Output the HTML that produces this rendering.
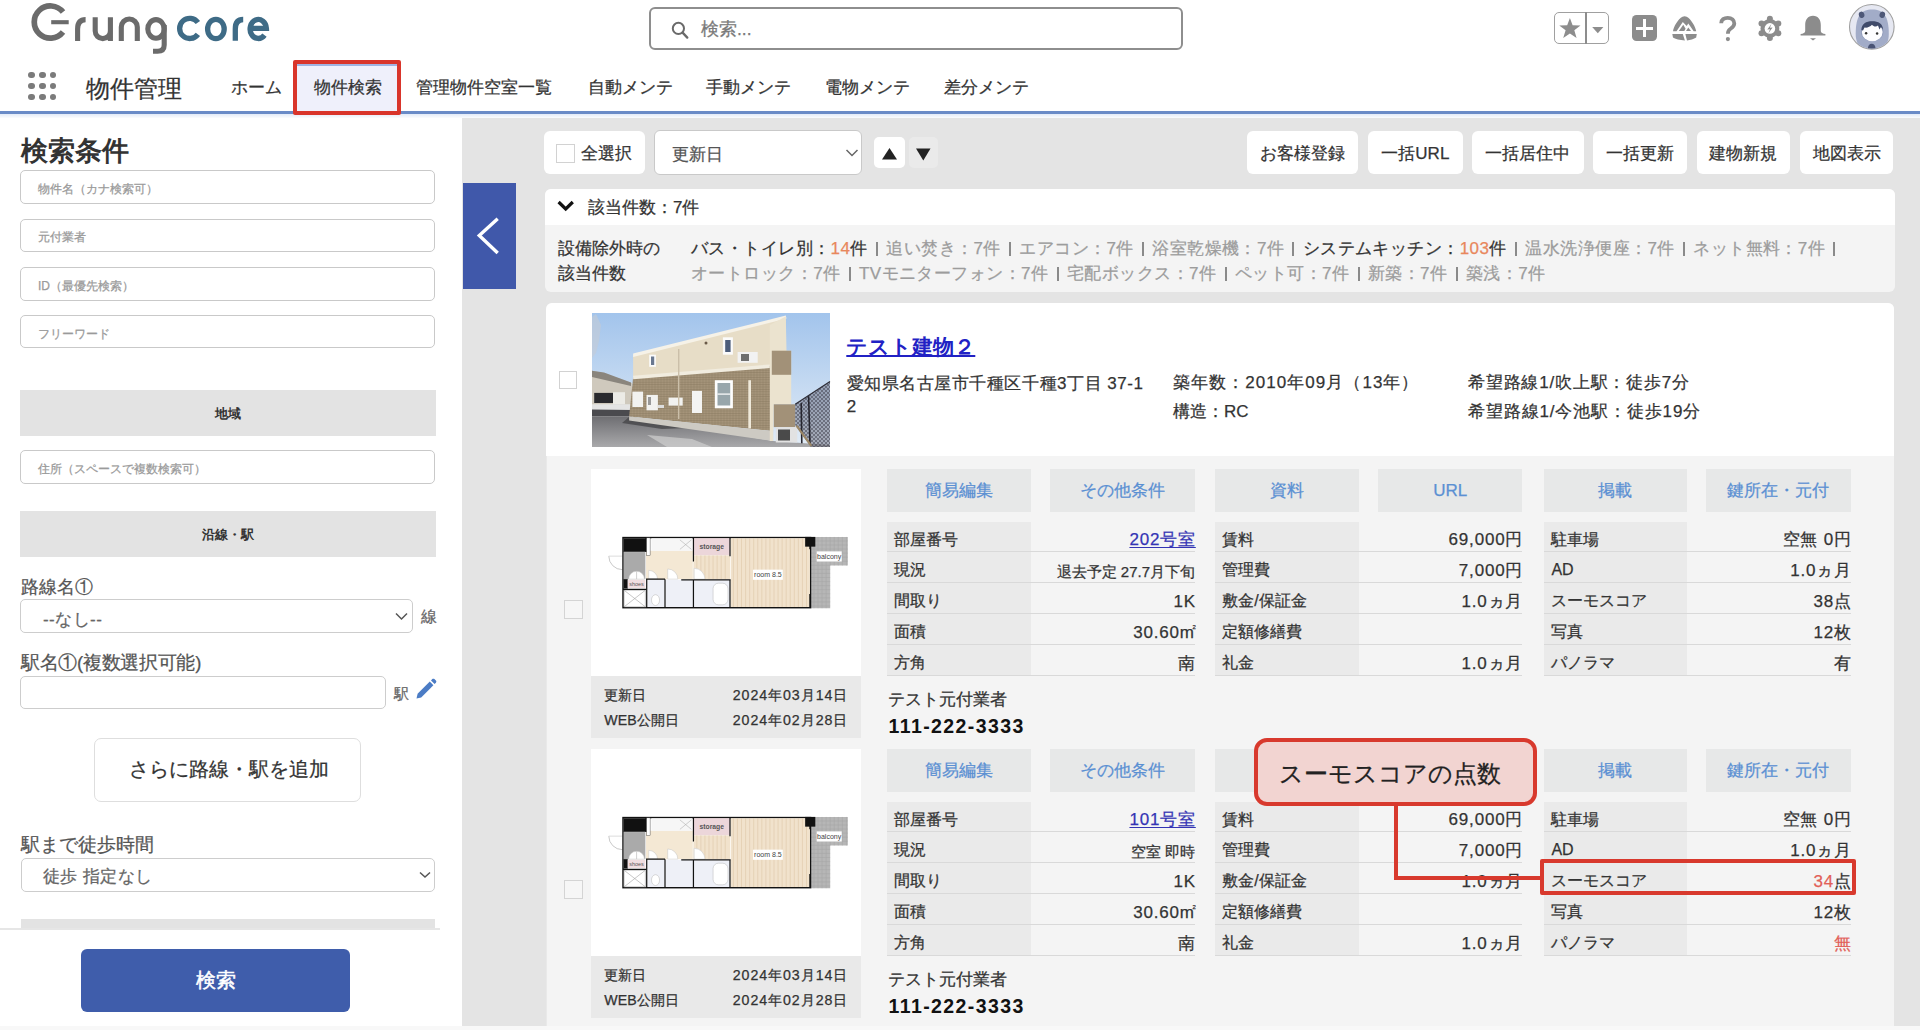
<!DOCTYPE html>
<html lang="ja"><head><meta charset="utf-8"><title>物件検索</title>
<style>
html,body{margin:0;padding:0}
body{width:1920px;height:1030px;overflow:hidden;position:relative;background:#e4e4e4;font-family:"Liberation Sans",sans-serif;color:#333}
.t{position:absolute;white-space:nowrap;-webkit-text-stroke-width:0.25px}
.r{position:absolute;box-sizing:border-box}
svg{position:absolute;overflow:visible}
</style></head><body>

<div class="r" style="left:0px;top:0px;width:1920px;height:111px;background:#fff"></div>
<svg style="left:0;top:0" width="300" height="60" viewBox="0 0 300 60">
<g fill="none" stroke="#6b6b6b" stroke-width="5.4" stroke-linecap="butt">
<path d="M63.0 12.1 A16.1 16.1 0 1 0 63.0 32.0" stroke-width="5.7"/>
<path d="M51.2 22.2 H68.7" stroke-width="4.1"/>
<path d="M77.6 41 V29 Q77.6 19.6 85.6 19.6" stroke-width="5.1"/>
<path d="M95.2 17.2 V31 A7.6 7.6 0 0 0 110.4 31 M110.4 17.2 V41" stroke-width="5.1"/>
<path d="M121.3 41 V27 A8 8 0 0 1 137.3 27 V41" stroke-width="5.1"/>
<ellipse cx="156" cy="28.9" rx="8.2" ry="9.3" stroke-width="5.1"/>
<path d="M164.2 25 V45 Q164.2 51.3 157.5 51.3 H153" stroke-width="5.1"/>
</g>
<g fill="none" stroke="#3e6b86" stroke-width="5.3">
<path d="M197.9 22.46 A10.1 10.1 0 1 0 197.9 34.34"/>
<ellipse cx="215.9" cy="29" rx="8.3" ry="9.7"/>
<path d="M235.3 40.8 V29 Q235.3 19.5 243.2 19.5"/>
<path d="M250.1 28.45 H266.4 A8.15 9.5 0 1 0 264.5 35.1"/>
</g></svg>
<div class="r" style="left:649px;top:7px;width:534px;height:42.6px;border:2px solid #8e8e8e;border-radius:6px;background:#fff"></div>
<svg style="left:670px;top:20px" width="24" height="22" viewBox="0 0 24 22">
<circle cx="8.4" cy="8.4" r="5.6" fill="none" stroke="#6a6a6a" stroke-width="2"/>
<path d="M12.6 12.6 L17.3 17.6" stroke="#6a6a6a" stroke-width="2.3" stroke-linecap="round"/></svg>
<div class="t " style="left:701px;top:20.7px;font-size:17.5px;line-height:17.5px;color:#7a7a7a;font-weight:normal;">検索...</div>
<div class="r" style="left:1553.5px;top:12.3px;width:55.5px;height:31.499999999999996px;border:1.8px solid #a0a0a0;border-radius:5px"></div>
<div class="r" style="left:1584.8px;top:12.3px;width:1.7999999999999545px;height:31.499999999999996px;background:#8d8d8d"></div>
<svg style="left:1559px;top:17px" width="22" height="22" viewBox="0 0 22 22">
<path d="M10.90 0.88 L13.61 8.34 L21.52 8.45 L15.31 13.31 L17.57 20.99 L10.90 16.47 L4.23 20.99 L6.61 13.31 L0.28 8.45 L8.19 8.34 Z" fill="#8d8d8d"/></svg>
<svg style="left:1590px;top:26px" width="16" height="10" viewBox="0 0 16 10">
<path d="M2.2 1 H13.4 L7.8 7.3 Z" fill="#8d8d8d"/></svg>
<div class="r" style="left:1631.5px;top:15px;width:25.700000000000045px;height:26px;background:#8c8c8c;border-radius:4.5px"></div>
<div class="r" style="left:1635.5px;top:26.5px;width:17.700000000000045px;height:3.0px;background:#fff"></div>
<div class="r" style="left:1642.8px;top:19.3px;width:3.0px;height:17.499999999999996px;background:#fff"></div>
<svg style="left:1665px;top:10px" width="40" height="36" viewBox="0 0 40 36">
<g fill="#8c8c8c">
<path d="M8 21.2 C8.5 17 13 9 17.5 6.8 C18.8 6 20.4 6 21.7 6.8 C26 9 30.6 17 31.2 21.2 L28.7 21.2 L23.3 13.6 L21.7 16 L17.8 12 L11.5 21.2 Z"/>
<path d="M13.8 21.1 L18.3 14.8 L20.6 18.8 L19.3 21.1 Z"/>
<path d="M21 21.1 L23.3 17.4 L26 21.1 Z"/>
<path d="M7.3 23.9 L17.8 23.9 L19.9 30.4 C15 30 10 28.8 8 27.4 Z"/>
<path d="M20.4 23.9 L31.8 23.9 L31.2 27.4 C29 28.8 25 30 22 30.4 L20.8 26 Z"/>
</g></svg>
<svg style="left:1717px;top:15.8px" width="22" height="27" viewBox="0 0 22 27">
<path d="M4.2 7.2 C4.2 3.5 7.2 1.8 10.7 1.8 C14.8 1.8 17.3 4.3 17.3 7.5 C17.3 10.5 15 11.8 13.2 13 C11.4 14.2 10.9 15.3 10.9 17.8" fill="none" stroke="#8c8c8c" stroke-width="3.8"/>
<circle cx="10.9" cy="23.1" r="2.1" fill="#8c8c8c"/></svg>
<svg style="left:1757px;top:15px" width="26" height="27" viewBox="0 0 26 27">
<g fill="#8c8c8c">
<circle cx="12.9" cy="13.4" r="9.4"/><circle cx="12.90" cy="3.70" r="3.0"/><circle cx="21.30" cy="8.55" r="3.0"/><circle cx="21.30" cy="18.25" r="3.0"/><circle cx="12.90" cy="23.10" r="3.0"/><circle cx="4.50" cy="18.25" r="3.0"/><circle cx="4.50" cy="8.55" r="3.0"/>
</g>
<circle cx="12.9" cy="13.4" r="5.3" fill="#fff"/>
<path d="M14.4 9.0 L10.3 14.6 L13.0 14.2 L11.4 18.2 L15.6 12.4 L12.9 12.8 Z" fill="#8c8c8c"/>
</svg>
<svg style="left:1799px;top:14px" width="28" height="28" viewBox="0 0 28 28">
<path d="M14 1.8 C8.8 1.8 6.2 5.8 6.2 11 V17 C6.2 18.8 4.2 19.6 1.6 20.1 V21.6 H26.4 V20.1 C23.8 19.6 21.8 18.8 21.8 17 V11 C21.8 5.8 19.2 1.8 14 1.8 Z" fill="#8c8c8c"/>
<path d="M11 24.2 H17 L14 26.5 Z" fill="#8c8c8c"/></svg>
<svg style="left:1848px;top:3px" width="48" height="48" viewBox="0 0 48 48">
<defs><clipPath id="avc"><circle cx="23.8" cy="23.8" r="21.8"/></clipPath></defs>
<circle cx="23.8" cy="23.8" r="22.3" fill="#e6e8f2" stroke="#a0a0a0" stroke-width="1.1"/>
<g clip-path="url(#avc)">
<path d="M7.7 31 C7.7 13 13 6.6 24.2 6.6 C35.4 6.6 40.8 13 40.8 31 C40.8 42 35 48 24.2 48 C13.4 48 7.7 42 7.7 31 Z" fill="#a2acc8"/>
<ellipse cx="13.6" cy="11.8" rx="2.8" ry="3.2" fill="#4e5878" transform="rotate(-15 13.6 11.8)"/>
<ellipse cx="34.3" cy="11.8" rx="2.8" ry="3.2" fill="#4e5878" transform="rotate(15 34.3 11.8)"/>
<ellipse cx="24.2" cy="28.4" rx="11.2" ry="10.2" fill="#8e99b8"/>
<ellipse cx="24.2" cy="29" rx="10.4" ry="9.2" fill="#fdfdff"/>
<path d="M13.4 27 C13.6 20.5 18 18.2 24.2 18.2 C30.4 18.2 34.8 20.5 35 26.5 L33 24 L31.5 26.5 L30 22.5 C28 24.5 25.5 23.5 24 21.8 C22 24 19 25 16.5 24.5 L15 27.5 Z" fill="#3f4a6a"/>
<circle cx="18.1" cy="30.2" r="1.25" fill="#333"/><circle cx="29.1" cy="30.4" r="1.25" fill="#333"/>
<path d="M19.8 46 C19.8 42.5 21.6 40.8 23.7 40.8 C25.8 40.8 27.6 42.5 27.6 46 Z" fill="#4a5474"/>
</g></svg>
<div class="r" style="left:28.2px;top:71.9px;width:6.6px;height:6.6px;border-radius:50%;background:#7b7b7b"></div>
<div class="r" style="left:28.2px;top:82.7px;width:6.6px;height:6.6px;border-radius:50%;background:#7b7b7b"></div>
<div class="r" style="left:28.2px;top:93.5px;width:6.6px;height:6.6px;border-radius:50%;background:#7b7b7b"></div>
<div class="r" style="left:39.0px;top:71.9px;width:6.6px;height:6.6px;border-radius:50%;background:#7b7b7b"></div>
<div class="r" style="left:39.0px;top:82.7px;width:6.6px;height:6.6px;border-radius:50%;background:#7b7b7b"></div>
<div class="r" style="left:39.0px;top:93.5px;width:6.6px;height:6.6px;border-radius:50%;background:#7b7b7b"></div>
<div class="r" style="left:49.7px;top:71.9px;width:6.6px;height:6.6px;border-radius:50%;background:#7b7b7b"></div>
<div class="r" style="left:49.7px;top:82.7px;width:6.6px;height:6.6px;border-radius:50%;background:#7b7b7b"></div>
<div class="r" style="left:49.7px;top:93.5px;width:6.6px;height:6.6px;border-radius:50%;background:#7b7b7b"></div>
<div class="t " style="left:86px;top:77.2px;font-size:23.8px;line-height:23.8px;color:#333;font-weight:normal;">物件管理</div>
<div class="t " style="left:231px;top:78.7px;font-size:17px;line-height:17px;color:#333;font-weight:normal;">ホーム</div>
<div class="r" style="left:297px;top:64px;width:100px;height:47px;background:#eff0fb;border-top:2px solid #9fb3e2"></div>
<div class="t " style="left:314px;top:78.7px;font-size:17px;line-height:17px;color:#333;font-weight:normal;">物件検索</div>
<div class="t " style="left:416px;top:79.2px;font-size:17.2px;line-height:17.2px;color:#333;font-weight:normal;">管理物件空室一覧</div>
<div class="t " style="left:588px;top:79.2px;font-size:17px;line-height:17px;color:#333;font-weight:normal;">自動メンテ</div>
<div class="t " style="left:706px;top:79.2px;font-size:17px;line-height:17px;color:#333;font-weight:normal;">手動メンテ</div>
<div class="t " style="left:825px;top:79.2px;font-size:17px;line-height:17px;color:#333;font-weight:normal;">電物メンテ</div>
<div class="t " style="left:944px;top:79.2px;font-size:17px;line-height:17px;color:#333;font-weight:normal;">差分メンテ</div>
<div class="r" style="left:0px;top:111.3px;width:1920px;height:3.0px;background:#6a8bc7"></div>
<div class="r" style="left:0px;top:114.3px;width:1920px;height:3.700000000000003px;background:linear-gradient(#e3ebf8,#fbfcfe)"></div>
<div class="r" style="left:293px;top:60px;width:107.5px;height:54.5px;border:4px solid #d9352b;border-radius:2px"></div>
<div class="r" style="left:0px;top:118px;width:462px;height:912px;background:#fff"></div>
<div class="t " style="left:21px;top:137.8px;font-size:26.5px;line-height:26.5px;color:#333;font-weight:bold;-webkit-text-stroke-width:0;">検索条件</div>
<div class="r" style="left:20px;top:170px;width:415px;height:34px;border:1.8px solid #c9c9c9;border-radius:5px;background:#fff"></div>
<div class="t " style="left:38px;top:183.0px;font-size:12px;line-height:12px;color:#9a9a9a;font-weight:normal;">物件名（カナ検索可）</div>
<div class="r" style="left:20px;top:218.5px;width:415px;height:33.5px;border:1.8px solid #c9c9c9;border-radius:5px;background:#fff"></div>
<div class="t " style="left:38px;top:231.2px;font-size:12px;line-height:12px;color:#9a9a9a;font-weight:normal;">元付業者</div>
<div class="r" style="left:20px;top:266.5px;width:415px;height:34.0px;border:1.8px solid #c9c9c9;border-radius:5px;background:#fff"></div>
<div class="t " style="left:38px;top:279.5px;font-size:12px;line-height:12px;color:#9a9a9a;font-weight:normal;">ID（最優先検索）</div>
<div class="r" style="left:20px;top:314.6px;width:415px;height:33.89999999999998px;border:1.8px solid #c9c9c9;border-radius:5px;background:#fff"></div>
<div class="t " style="left:38px;top:327.5px;font-size:12px;line-height:12px;color:#9a9a9a;font-weight:normal;">フリーワード</div>
<div class="r" style="left:20px;top:390px;width:416px;height:46px;background:#e3e3e3"></div>
<div class="t" style="left:20px;width:416px;top:406.6px;font-size:13px;line-height:13px;color:#333;font-weight:bold;text-align:center;-webkit-text-stroke-width:0;">地域</div>
<div class="r" style="left:20px;top:449.5px;width:415px;height:34.0px;border:1.8px solid #c9c9c9;border-radius:5px;background:#fff"></div>
<div class="t " style="left:38px;top:462.5px;font-size:12px;line-height:12px;color:#9a9a9a;font-weight:normal;">住所（スペースで複数検索可）</div>
<div class="r" style="left:20px;top:511px;width:416px;height:46px;background:#e3e3e3"></div>
<div class="t" style="left:20px;width:416px;top:527.6px;font-size:13px;line-height:13px;color:#333;font-weight:bold;text-align:center;-webkit-text-stroke-width:0;">沿線・駅</div>
<div class="t " style="left:21px;top:577.7px;font-size:18.4px;line-height:18.4px;color:#555;font-weight:normal;">路線名①</div>
<div class="r" style="left:20px;top:599px;width:392.5px;height:34.299999999999955px;border:1.5px solid #cdcdcd;border-radius:5px;background:#fff"></div>
<div class="t " style="left:43px;top:610.7px;font-size:17px;line-height:17px;color:#666;font-weight:normal;letter-spacing:0.45px">--なし--</div>
<svg style="left:395px;top:612px" width="13" height="9" viewBox="0 0 13 9"><path d="M1 1.5 L6.5 7 L12 1.5" fill="none" stroke="#555" stroke-width="1.5"/></svg>
<div class="t " style="left:420.5px;top:608.8px;font-size:16px;line-height:16px;color:#666;font-weight:normal;">線</div>
<div class="t " style="left:21px;top:653.9px;font-size:18.6px;line-height:18.6px;color:#555;font-weight:normal;letter-spacing:-0.3px">駅名①(複数選択可能)</div>
<div class="r" style="left:20px;top:675.6px;width:365.6px;height:33.39999999999998px;border:1.5px solid #cdcdcd;border-radius:5px;background:#fff"></div>
<div class="t " style="left:393.6px;top:685.6px;font-size:15px;line-height:15px;color:#666;font-weight:normal;">駅</div>
<svg style="left:414px;top:678px" width="23" height="22" viewBox="0 0 23 22">
<path d="M2.5 20.5 L3.6 15.8 L15.8 3.6 L19.4 7.2 L7.2 19.4 Z" fill="#4b7cc5"/>
<path d="M17 2.4 L18.3 1.1 C18.9 0.5 19.8 0.5 20.4 1.1 L21.9 2.6 C22.5 3.2 22.5 4.1 21.9 4.7 L20.6 6 Z" fill="#4b7cc5"/></svg>
<div class="r" style="left:94.2px;top:737.5px;width:266.8px;height:64.29999999999995px;border:1.5px solid #dedede;border-radius:7px;background:#fff"></div>
<div class="t " style="left:129.4px;top:759.7px;font-size:19.8px;line-height:19.8px;color:#333;font-weight:normal;">さらに路線・駅を追加</div>
<div class="t " style="left:21px;top:836.2px;font-size:18.5px;line-height:18.5px;color:#555;font-weight:normal;">駅まで徒歩時間</div>
<div class="r" style="left:20.5px;top:858.4px;width:414.9px;height:33.60000000000002px;border:1.5px solid #cdcdcd;border-radius:5px;background:#fff"></div>
<div class="t " style="left:43px;top:868.0px;font-size:17px;line-height:17px;color:#666;font-weight:normal;letter-spacing:0.38px">徒歩 指定なし</div>
<svg style="left:419px;top:871px" width="12" height="8" viewBox="0 0 12 8"><path d="M1 1.5 L6 6 L11 1.5" fill="none" stroke="#555" stroke-width="1.5"/></svg>
<div class="r" style="left:20.5px;top:919px;width:414.9px;height:9.200000000000045px;background:#e3e3e3"></div>
<div class="r" style="left:0px;top:928px;width:440px;height:1.5px;background:#e6e6e6"></div>
<div class="r" style="left:81.2px;top:949.3px;width:268.8px;height:62.60000000000002px;background:#3f5dab;border-radius:6px"></div>
<div class="t" style="left:81.2px;width:268.8px;top:971.2px;font-size:19.5px;line-height:19.5px;color:#fff;font-weight:normal;text-align:center;-webkit-text-stroke-width:0.5px">検索</div>
<div class="r" style="left:462.7px;top:183px;width:52.900000000000034px;height:105.60000000000002px;background:#4058aa"></div>
<svg style="left:475px;top:214px" width="28" height="44" viewBox="0 0 28 44"><path d="M22.7 4.8 L4.3 21.5 L22.7 39" fill="none" stroke="#fff" stroke-width="3.4"/></svg>
<div class="r" style="left:544.4px;top:130.5px;width:100.20000000000005px;height:43.80000000000001px;background:#fff;border-radius:6px"></div>
<div class="r" style="left:556.4px;top:144px;width:18.600000000000023px;height:18.69999999999999px;border:1.5px solid #d2d2d2;background:#fff"></div>
<div class="t " style="left:581px;top:146.0px;font-size:16.8px;line-height:16.8px;color:#333;font-weight:normal;">全選択</div>
<div class="r" style="left:654.2px;top:129.8px;width:207.79999999999995px;height:45.19999999999999px;background:#fff;border:1.3px solid #c9c9c9;border-radius:6px"></div>
<div class="t " style="left:672px;top:145.7px;font-size:17px;line-height:17px;color:#555;font-weight:normal;">更新日</div>
<svg style="left:845px;top:148px" width="14" height="10" viewBox="0 0 14 10"><path d="M1.5 2 L7 7.5 L12.5 2" fill="none" stroke="#666" stroke-width="1.5"/></svg>
<div class="r" style="left:874.3px;top:137px;width:30.700000000000045px;height:30.69999999999999px;background:#fff;border-radius:5px"></div>
<svg style="left:880px;top:146px" width="20" height="16" viewBox="0 0 20 16"><path d="M2 13.4 L9.5 2 L17 13.4 Z" fill="#222"/></svg>
<div class="r" style="left:908.6px;top:137px;width:29.399999999999977px;height:30.69999999999999px;background:#eaeaea;border-radius:5px"></div>
<svg style="left:914px;top:146px" width="20" height="16" viewBox="0 0 20 16"><path d="M2 2.4 L16.5 2.4 L9.3 14.5 Z" fill="#222"/></svg>
<div class="r" style="left:1246.5px;top:130.8px;width:111.0px;height:43.39999999999998px;background:#fff;border-radius:6px"></div>
<div class="t" style="left:1246.5px;width:111.0px;top:145.2px;font-size:17px;line-height:17px;color:#333;font-weight:normal;text-align:center;">お客様登録</div>
<div class="r" style="left:1367.8px;top:130.8px;width:95.10000000000014px;height:43.39999999999998px;background:#fff;border-radius:6px"></div>
<div class="t" style="left:1367.8px;width:95.10000000000014px;top:145.2px;font-size:17px;line-height:17px;color:#333;font-weight:normal;text-align:center;">一括URL</div>
<div class="r" style="left:1472px;top:130.8px;width:111.5px;height:43.39999999999998px;background:#fff;border-radius:6px"></div>
<div class="t" style="left:1472px;width:111.5px;top:145.2px;font-size:17px;line-height:17px;color:#333;font-weight:normal;text-align:center;">一括居住中</div>
<div class="r" style="left:1593.3px;top:130.8px;width:93.5px;height:43.39999999999998px;background:#fff;border-radius:6px"></div>
<div class="t" style="left:1593.3px;width:93.5px;top:145.2px;font-size:17px;line-height:17px;color:#333;font-weight:normal;text-align:center;">一括更新</div>
<div class="r" style="left:1696.5px;top:130.8px;width:93.29999999999995px;height:43.39999999999998px;background:#fff;border-radius:6px"></div>
<div class="t" style="left:1696.5px;width:93.29999999999995px;top:145.2px;font-size:17px;line-height:17px;color:#333;font-weight:normal;text-align:center;">建物新規</div>
<div class="r" style="left:1800px;top:130.8px;width:93px;height:43.39999999999998px;background:#fff;border-radius:6px"></div>
<div class="t" style="left:1800px;width:93px;top:145.2px;font-size:17px;line-height:17px;color:#333;font-weight:normal;text-align:center;">地図表示</div>
<div class="r" style="left:545.3px;top:189px;width:1350.1000000000001px;height:103px;background:#f4f4f4;border-radius:6px;overflow:hidden"></div>
<div class="r" style="left:545.3px;top:189px;width:1350.1000000000001px;height:36px;background:#fff;border-radius:6px 6px 0 0"></div>
<svg style="left:556px;top:199px" width="20" height="14" viewBox="0 0 20 14"><path d="M2.6 3 L9.7 10 L16.8 3" fill="none" stroke="#111" stroke-width="3.2"/></svg>
<div class="t " style="left:588px;top:199.2px;font-size:17px;line-height:17px;color:#333;font-weight:normal;">該当件数：7件</div>
<div class="t " style="left:558px;top:239.8px;font-size:17px;line-height:17px;color:#333;font-weight:normal;">設備除外時の</div>
<div class="t " style="left:558px;top:264.6px;font-size:17px;line-height:17px;color:#333;font-weight:normal;">該当件数</div>
<div class="t " style="left:691px;top:239.8px;font-size:17px;line-height:17px;color:#333;font-weight:normal;letter-spacing:0.45px"><span style="color:#333">バス・トイレ別：<span style="color:#e8875c">14</span>件</span><span style="display:inline-block;width:2px;height:14px;background:#707070;margin:0 8.2px;vertical-align:-2px;transform:scaleX(0.8)"></span><span style="color:#9c9c9c">追い焚き：7件</span><span style="display:inline-block;width:2px;height:14px;background:#707070;margin:0 8.2px;vertical-align:-2px;transform:scaleX(0.8)"></span><span style="color:#9c9c9c">エアコン：7件</span><span style="display:inline-block;width:2px;height:14px;background:#707070;margin:0 8.2px;vertical-align:-2px;transform:scaleX(0.8)"></span><span style="color:#9c9c9c">浴室乾燥機：7件</span><span style="display:inline-block;width:2px;height:14px;background:#707070;margin:0 8.2px;vertical-align:-2px;transform:scaleX(0.8)"></span><span style="color:#333">システムキッチン：<span style="color:#e8875c">103</span>件</span><span style="display:inline-block;width:2px;height:14px;background:#707070;margin:0 8.2px;vertical-align:-2px;transform:scaleX(0.8)"></span><span style="color:#9c9c9c">温水洗浄便座：7件</span><span style="display:inline-block;width:2px;height:14px;background:#707070;margin:0 8.2px;vertical-align:-2px;transform:scaleX(0.8)"></span><span style="color:#9c9c9c">ネット無料：7件</span><span style="display:inline-block;width:2px;height:14px;background:#707070;margin:0 8.2px;vertical-align:-2px;transform:scaleX(0.8)"></span></div>
<div class="t " style="left:691px;top:264.6px;font-size:17px;line-height:17px;color:#333;font-weight:normal;letter-spacing:0.45px"><span style="color:#9c9c9c">オートロック：7件</span><span style="display:inline-block;width:2px;height:14px;background:#707070;margin:0 8.2px;vertical-align:-2px;transform:scaleX(0.8)"></span><span style="color:#9c9c9c">TVモニターフォン：7件</span><span style="display:inline-block;width:2px;height:14px;background:#707070;margin:0 8.2px;vertical-align:-2px;transform:scaleX(0.8)"></span><span style="color:#9c9c9c">宅配ボックス：7件</span><span style="display:inline-block;width:2px;height:14px;background:#707070;margin:0 8.2px;vertical-align:-2px;transform:scaleX(0.8)"></span><span style="color:#9c9c9c">ペット可：7件</span><span style="display:inline-block;width:2px;height:14px;background:#707070;margin:0 8.2px;vertical-align:-2px;transform:scaleX(0.8)"></span><span style="color:#9c9c9c">新築：7件</span><span style="display:inline-block;width:2px;height:14px;background:#707070;margin:0 8.2px;vertical-align:-2px;transform:scaleX(0.8)"></span><span style="color:#9c9c9c">築浅：7件</span></div>
<div class="r" style="left:546px;top:302.6px;width:1348.2px;height:723.4px;background:#f4f4f4;border-radius:6px 6px 0 0;overflow:hidden;border-left:1.5px solid #e9e9e9"></div>
<div class="r" style="left:546px;top:302.6px;width:1348.2px;height:153.7px;background:#fff;border-radius:6px 6px 0 0"></div>
<div class="r" style="left:559px;top:371px;width:18.399999999999977px;height:18.399999999999977px;border:1.5px solid #d2d2d2;background:#fff"></div>
<svg style="left:591.8px;top:312.5px" width="238" height="134" viewBox="0 0 238 134" preserveAspectRatio="none">
<defs><linearGradient id="sky" x1="0" y1="0" x2="0" y2="1"><stop offset="0" stop-color="#a2c4ec"/><stop offset="0.7" stop-color="#cfe0f3"/><stop offset="1" stop-color="#e2ecf6"/></linearGradient>
<linearGradient id="road" x1="0" y1="0" x2="0" y2="1"><stop offset="0" stop-color="#6e6e72"/><stop offset="1" stop-color="#a9a9ab"/></linearGradient>
<pattern id="brick" width="3" height="2.4" patternUnits="userSpaceOnUse"><rect width="3" height="2.4" fill="#a08f75"/><rect y="1.8" width="3" height="0.6" fill="#8f7f66"/><rect x="1.2" width="0.5" height="1.8" fill="#ab9a80"/></pattern>
<pattern id="fence" width="4" height="4" patternUnits="userSpaceOnUse"><path d="M0 0 L4 4 M4 0 L0 4" stroke="#3a3a46" stroke-width="0.5"/></pattern>
</defs>
<rect width="238" height="134" fill="url(#sky)"/>
<path d="M0 4 L4 1 L9 12 L7 28 L4 40 L0 45 Z" fill="#c4ccd6" opacity="0.6"/>
<!-- left house -->
<path d="M0 57.8 L12 60 L40 70 L40 92 L0 92 Z" fill="#cfc9bd"/>
<path d="M0 57.8 L12 59.5 L39 69.5 L39 73 L0 64 Z" fill="#8a857d"/>
<rect x="2.2" y="79.9" width="18.8" height="10.1" fill="#2a2a2e"/>
<rect x="21" y="79.2" width="12" height="12.1" fill="#ecebe6"/>
<!-- road -->
<path d="M0 91.3 L40 91.3 L40 104 L0 104 Z" fill="#e4e4e4"/>
<path d="M0 96.6 L40 97 L40 103.4 L0 103.4 Z" fill="#4a4a4e"/>
<path d="M0 103.4 L37 103.4 L181 128 L238 132 L238 134 L0 134 Z" fill="url(#road)"/>
<path d="M37 104 L120 114 L70 116 L30 110 Z" fill="#3e3e42" opacity="0.7"/>
<path d="M55 122 L100 126 L120 134 L75 134 Z" fill="#cfcfcf" opacity="0.7"/>
<!-- upper floor -->
<path d="M41.1 41.7 L193.8 3.5 L193.8 10 L177.8 53.1 L41.1 64.5 Z" fill="#e7ddc7"/>
<path d="M41.1 40.5 L193.8 2.5 L194.5 5.5 L41.1 44 Z" fill="#f6f2e8"/>
<!-- brick -->
<path d="M41.1 64.5 L177.8 53.1 L181.1 118.1 L37.1 103.4 Z" fill="url(#brick)"/>
<path d="M41.1 62.8 L177.8 51.4 L177.8 55 L41.1 66.3 Z" fill="#f1ecdf"/>
<path d="M37.1 103.4 L181.1 118.1 L181.1 128.1 L37.1 107.5 Z" fill="#cdcac3"/>
<!-- end wall -->
<path d="M177.8 12 L193.8 3.5 L194.5 37.7 L199.2 37.7 L199.2 91.3 L181.8 91.3 L181.1 128 L177.8 128 Z" fill="#ebe3cf"/>
<rect x="179.8" y="37.7" width="19.4" height="24.1" fill="#a29178"/>
<rect x="181.8" y="91.3" width="21.4" height="22.8" fill="#a29178"/>
<rect x="183.8" y="114.1" width="21.4" height="15.4" fill="#e2e2e2"/>
<rect x="186" y="116.5" width="12" height="11" fill="#4a4a4a"/>
<!-- windows -->
<rect x="57.2" y="41.7" width="6.7" height="12.1" fill="#fbfbfb"/><rect x="59" y="43.5" width="3.2" height="8.5" fill="#6a7890"/>
<rect x="130.9" y="24.3" width="10" height="17.4" fill="#fbfbfb"/><rect x="133.2" y="27" width="5.4" height="12" fill="#4d5d7a"/>
<rect x="122.8" y="67.2" width="18.1" height="28.1" fill="#fdfdfd"/><rect x="125.5" y="70" width="12.7" height="22.5" fill="#98a6ab"/><rect x="125.5" y="80.5" width="12.7" height="1.2" fill="#fff"/>
<rect x="100" y="77.9" width="10" height="22.1" fill="#f4f4f2"/>
<rect x="40.4" y="78.6" width="10.7" height="15.4" fill="#f2f2f0"/>
<rect x="54.5" y="81.9" width="11.4" height="15.4" fill="#f2f2f0"/><rect x="56" y="84" width="3" height="8" fill="#999"/>
<rect x="76.6" y="84.6" width="14.1" height="8" fill="#f2f2f0"/>
<rect x="66" y="92" width="6" height="3" fill="#ddd"/>
<rect x="145.6" y="39" width="20.1" height="10.8" fill="#f2f2f2"/><rect x="149" y="41" width="8" height="7" fill="#6e6e6e"/>
<rect x="156.3" y="67.2" width="2.7" height="48.2" fill="#efe9da"/>
<rect x="86" y="36" width="1.4" height="70" fill="#cbbfa9"/>
<circle cx="114" cy="30" r="1.5" fill="#6a5a48"/>
<!-- fence -->
<path d="M203.2 91.3 L238 68.5 L238 134 L219 134 L203.2 112 Z" fill="#58586a" opacity="0.45"/>
<path d="M203.2 91.3 L238 68.5 L238 134 L219 134 L203.2 112 Z" fill="url(#fence)"/>
<path d="M203.2 91.3 L238 68.5" stroke="#2e2e38" stroke-width="1.2"/>
<path d="M209.2 89.9 L209.8 130.2 M216.6 83.3 L218 131.5" stroke="#25252e" stroke-width="1.6"/>
<path d="M204.5 112.7 L219.3 132.8" stroke="#9c8868" stroke-width="2.2"/>
</svg>

<div class="t " style="left:846.3px;top:336.7px;font-size:20.6px;line-height:20.6px;color:#2121c4;font-weight:bold;-webkit-text-stroke-width:0;"><span style="text-decoration:underline;text-underline-offset:1px;text-decoration-thickness:2px">テスト建物２</span></div>
<div class="t " style="left:846.8px;top:375.2px;font-size:17px;line-height:17px;color:#333;font-weight:normal;letter-spacing:0.52px">愛知県名古屋市千種区千種3丁目 37-1</div>
<div class="t " style="left:846.8px;top:398.0px;font-size:17px;line-height:17px;color:#333;font-weight:normal;">2</div>
<div class="t " style="left:1173px;top:373.5px;font-size:17px;line-height:17px;color:#333;font-weight:normal;letter-spacing:1.05px">築年数：2010年09月（13年）</div>
<div class="t " style="left:1173px;top:403.2px;font-size:17px;line-height:17px;color:#333;font-weight:normal;">構造：RC</div>
<div class="t " style="left:1468px;top:373.5px;font-size:17px;line-height:17px;color:#333;font-weight:normal;letter-spacing:0.8px">希望路線1/吹上駅：徒歩7分</div>
<div class="t " style="left:1468px;top:403.2px;font-size:17px;line-height:17px;color:#333;font-weight:normal;letter-spacing:0.87px">希望路線1/今池駅：徒歩19分</div>
<div class="r" style="left:564.2px;top:600px;width:18.59999999999991px;height:18.700000000000045px;border:1.5px solid #d4d4d4;background:#f6f6f6"></div>
<div class="r" style="left:590.7px;top:468.6px;width:270.29999999999995px;height:207.69999999999993px;background:#fff"></div>
<svg style="left:600px;top:525px" width="260" height="95" viewBox="0 0 1920 702" preserveAspectRatio="none">
<path d="M65 230 A100 100 0 0 0 165 330" fill="none" stroke="#bbb" stroke-width="6"/>
<path d="M65 230 H165" stroke="#ccc" stroke-width="5"/>
<path d="M1560 88 H1830 V300 H1700 V615 H1560 Z" fill="#b6b6b6"/><g stroke="#9e9e9e" stroke-width="3" opacity="0.8"><path d="M1580 88V615M1610 88V615M1640 88V615M1670 88V615M1700 88V300M1730 88V300M1760 88V300M1790 88V300M1820 88V300M1560 118H1830M1560 148H1830M1560 178H1830M1560 208H1830M1560 238H1830M1560 268H1830M1560 298H1700M1560 328H1700M1560 358H1700M1560 388H1700M1560 418H1700M1560 448H1700M1560 478H1700M1560 508H1700M1560 538H1700M1560 568H1700M1560 598H1700"/></g>
<rect x="1600" y="195" width="185" height="75" fill="#fff"/>
<text x="1692" y="252" font-size="52" text-anchor="middle" fill="#444" font-family="Liberation Sans">balcony</text>
<rect x="170" y="93" width="1385" height="518" fill="#fff" stroke="#111" stroke-width="11"/>
<rect x="965" y="98" width="585" height="508" fill="#f1e2cc"/>
<g stroke="#dcc3a4" stroke-width="4">
<path d="M985 98V606M1015 98V606M1045 98V606M1075 98V606M1105 98V606M1135 98V606M1165 98V606M1195 98V606M1225 98V606M1255 98V606M1285 98V606M1315 98V606M1345 98V606M1375 98V606M1405 98V606M1435 98V606M1465 98V606M1495 98V606M1525 98V606"/>
</g>
<rect x="1130" y="330" width="220" height="75" fill="#fff"/>
<text x="1240" y="388" font-size="52" text-anchor="middle" fill="#444" font-family="Liberation Sans">room 8.5</text>
<rect x="690" y="98" width="270" height="127" fill="#ecd6da"/>
<text x="825" y="178" font-size="50" text-anchor="middle" fill="#555" font-family="Liberation Sans" font-weight="bold">storage</text>
<rect x="690" y="225" width="270" height="175" fill="#f1e2cc"/>
<g stroke="#dcc3a4" stroke-width="4"><path d="M715 225V400M745 225V400M775 225V400M805 225V400M835 225V400M865 225V400M895 225V400M925 225V400"/></g>
<rect x="340" y="190" width="345" height="210" fill="#f4e8d4"/>
<rect x="380" y="98" width="300" height="92" fill="#f6f6f6"/>
<path d="M590 110 L675 180 M675 110 L590 180" stroke="#aaa" stroke-width="4"/>
<rect x="175" y="98" width="165" height="100" fill="#111"/>
<rect x="175" y="200" width="160" height="200" fill="#aaa"/>
<path d="M270 400 L212 400 A58 58 0 0 1 270 342 Z M270 400 L328 400 A58 58 0 0 0 270 342 Z M360 400 L360 335 A65 65 0 0 1 425 400 Z M500 400 L500 325 A75 75 0 0 1 575 400 Z M695 400 L695 320 A80 80 0 0 1 775 400 Z" fill="#fff" stroke="#c8c8c8" stroke-width="4"/>
<rect x="175" y="400" width="30" height="70" fill="#111"/>
<rect x="205" y="405" width="130" height="60" fill="#f0dde0"/>
<text x="270" y="450" font-size="40" text-anchor="middle" fill="#555" font-family="Liberation Sans">shoes</text>
<path d="M178 482 H335 V605 H178 Z M178 482 L335 605 M335 482 L178 605" fill="#fff" stroke="#999" stroke-width="4"/>
<rect x="350" y="405" width="125" height="200" fill="#eef0f7"/>
<rect x="485" y="405" width="205" height="200" fill="#eef0f7"/>
<rect x="695" y="410" width="265" height="195" fill="#eef0f7"/>
<rect x="835" y="430" width="110" height="160" rx="40" fill="#fff" stroke="#bbb" stroke-width="4"/>
<ellipse cx="410" cy="555" rx="30" ry="40" fill="#fff" stroke="#bbb" stroke-width="4"/>
<g stroke="#111" stroke-width="9" fill="none">
<path d="M340 93 V200 M345 400 V611 M480 400 V611 M690 93 V270 M690 400 V611 M960 93 V230 M960 400 V611 M340 400 H480 M600 405 H965 M170 475 H340 M1550 93 V180 M1550 510 V611"/>
</g>
<rect x="1515" y="88" width="75" height="72" fill="#111"/>
<rect x="345" y="95" width="25" height="130" fill="#fff" stroke="#333" stroke-width="3"/>
</svg>

<div class="r" style="left:591px;top:676.3px;width:270px;height:62.0px;background:#e9e9e9"></div>
<div class="t " style="left:604.3px;top:688.0px;font-size:14.2px;line-height:14.2px;color:#333;font-weight:normal;">更新日</div>
<div class="t" style="right:1074px;top:688.0px;font-size:14.2px;line-height:14.2px;color:#333;font-weight:normal;text-align:right;letter-spacing:0.95px;margin-right:-2.3px">2024年03月14日</div>
<div class="t " style="left:604.3px;top:712.8px;font-size:14.2px;line-height:14.2px;color:#333;font-weight:normal;">WEB公開日</div>
<div class="t" style="right:1074px;top:712.8px;font-size:14.2px;line-height:14.2px;color:#333;font-weight:normal;text-align:right;letter-spacing:0.95px;margin-right:-2.3px">2024年02月28日</div>
<div class="r" style="left:886.8px;top:469.2px;width:144.70000000000005px;height:43.00000000000006px;background:#e7e8e8"></div>
<div class="t" style="left:886.8px;width:144.70000000000005px;top:482.2px;font-size:17px;line-height:17px;color:#5b90d3;font-weight:normal;text-align:center;">簡易編集</div>
<div class="r" style="left:1050.3px;top:469.2px;width:144.70000000000005px;height:43.00000000000006px;background:#e7e8e8"></div>
<div class="t" style="left:1050.3px;width:144.70000000000005px;top:482.2px;font-size:17px;line-height:17px;color:#5b90d3;font-weight:normal;text-align:center;">その他条件</div>
<div class="r" style="left:1214.7px;top:469.2px;width:143.89999999999986px;height:43.00000000000006px;background:#e7e8e8"></div>
<div class="t" style="left:1214.7px;width:143.89999999999986px;top:482.2px;font-size:17px;line-height:17px;color:#5b90d3;font-weight:normal;text-align:center;">資料</div>
<div class="r" style="left:1377.9px;top:469.2px;width:144.5px;height:43.00000000000006px;background:#e7e8e8"></div>
<div class="t" style="left:1377.9px;width:144.5px;top:482.2px;font-size:17px;line-height:17px;color:#5b90d3;font-weight:normal;text-align:center;">URL</div>
<div class="r" style="left:1543.9px;top:469.2px;width:143.0999999999999px;height:43.00000000000006px;background:#e7e8e8"></div>
<div class="t" style="left:1543.9px;width:143.0999999999999px;top:482.2px;font-size:17px;line-height:17px;color:#5b90d3;font-weight:normal;text-align:center;">掲載</div>
<div class="r" style="left:1705.6px;top:469.2px;width:145.4000000000001px;height:43.00000000000006px;background:#e7e8e8"></div>
<div class="t" style="left:1705.6px;width:145.4000000000001px;top:482.2px;font-size:17px;line-height:17px;color:#5b90d3;font-weight:normal;text-align:center;">鍵所在・元付</div>
<div class="r" style="left:886.8px;top:521.5px;width:144.70000000000005px;height:154.0px;background:#eaeaea"></div>
<div class="r" style="left:886.8px;top:550.5px;width:308.20000000000005px;height:1.2999999999999545px;background:#d9d9d9"></div>
<div class="t " style="left:894.3px;top:531.7px;font-size:16px;line-height:16px;color:#333;font-weight:normal;">部屋番号</div>
<div class="t" style="right:725px;top:531.2px;font-size:17px;line-height:17px;color:#333;font-weight:normal;text-align:right;letter-spacing:0.8px;margin-right:-0.8px"><span style="color:#3434b4;text-decoration:underline;text-underline-offset:2px">202号室</span></div>
<div class="r" style="left:886.8px;top:581.5px;width:308.20000000000005px;height:1.2999999999999545px;background:#d9d9d9"></div>
<div class="t " style="left:894.3px;top:562.2px;font-size:16px;line-height:16px;color:#333;font-weight:normal;">現況</div>
<div class="t" style="right:725px;top:564.1px;font-size:15px;line-height:15px;color:#333;font-weight:normal;text-align:right;">退去予定 27.7月下旬</div>
<div class="r" style="left:886.8px;top:612.5px;width:308.20000000000005px;height:1.2999999999999545px;background:#d9d9d9"></div>
<div class="t " style="left:894.3px;top:593.2px;font-size:16px;line-height:16px;color:#333;font-weight:normal;">間取り</div>
<div class="t" style="right:725px;top:592.7px;font-size:17px;line-height:17px;color:#333;font-weight:normal;text-align:right;letter-spacing:0.8px;margin-right:-0.8px">1K</div>
<div class="r" style="left:886.8px;top:643.5px;width:308.20000000000005px;height:1.2999999999999545px;background:#d9d9d9"></div>
<div class="t " style="left:894.3px;top:624.2px;font-size:16px;line-height:16px;color:#333;font-weight:normal;">面積</div>
<div class="t" style="right:725px;top:623.7px;font-size:17px;line-height:17px;color:#333;font-weight:normal;text-align:right;letter-spacing:0.8px;margin-right:-0.8px">30.60m<span style="display:inline-block;font-size:6px;line-height:6px;vertical-align:8.5px;margin-left:-2.4px;letter-spacing:0">2</span></div>
<div class="r" style="left:886.8px;top:674.5px;width:308.20000000000005px;height:1.2999999999999545px;background:#d9d9d9"></div>
<div class="t " style="left:894.3px;top:655.2px;font-size:16px;line-height:16px;color:#333;font-weight:normal;">方角</div>
<div class="t" style="right:725px;top:654.7px;font-size:17px;line-height:17px;color:#333;font-weight:normal;text-align:right;letter-spacing:0.8px;margin-right:-0.8px">南</div>
<div class="r" style="left:1214.7px;top:521.5px;width:143.89999999999986px;height:154.0px;background:#eaeaea"></div>
<div class="r" style="left:1214.7px;top:550.5px;width:307.70000000000005px;height:1.2999999999999545px;background:#d9d9d9"></div>
<div class="t " style="left:1222.2px;top:531.7px;font-size:16px;line-height:16px;color:#333;font-weight:normal;">賃料</div>
<div class="t" style="right:397.5999999999999px;top:531.2px;font-size:17px;line-height:17px;color:#333;font-weight:normal;text-align:right;letter-spacing:0.8px;margin-right:-0.8px">69,000円</div>
<div class="r" style="left:1214.7px;top:581.5px;width:307.70000000000005px;height:1.2999999999999545px;background:#d9d9d9"></div>
<div class="t " style="left:1222.2px;top:562.2px;font-size:16px;line-height:16px;color:#333;font-weight:normal;">管理費</div>
<div class="t" style="right:397.5999999999999px;top:561.7px;font-size:17px;line-height:17px;color:#333;font-weight:normal;text-align:right;letter-spacing:0.8px;margin-right:-0.8px">7,000円</div>
<div class="r" style="left:1214.7px;top:612.5px;width:307.70000000000005px;height:1.2999999999999545px;background:#d9d9d9"></div>
<div class="t " style="left:1222.2px;top:593.2px;font-size:16px;line-height:16px;color:#333;font-weight:normal;">敷金/保証金</div>
<div class="t" style="right:397.5999999999999px;top:592.7px;font-size:17px;line-height:17px;color:#333;font-weight:normal;text-align:right;letter-spacing:0.8px;margin-right:-0.8px">1.0ヵ月</div>
<div class="r" style="left:1214.7px;top:643.5px;width:307.70000000000005px;height:1.2999999999999545px;background:#d9d9d9"></div>
<div class="t " style="left:1222.2px;top:624.2px;font-size:16px;line-height:16px;color:#333;font-weight:normal;">定額修繕費</div>
<div class="r" style="left:1214.7px;top:674.5px;width:307.70000000000005px;height:1.2999999999999545px;background:#d9d9d9"></div>
<div class="t " style="left:1222.2px;top:655.2px;font-size:16px;line-height:16px;color:#333;font-weight:normal;">礼金</div>
<div class="t" style="right:397.5999999999999px;top:654.7px;font-size:17px;line-height:17px;color:#333;font-weight:normal;text-align:right;letter-spacing:0.8px;margin-right:-0.8px">1.0ヵ月</div>
<div class="r" style="left:1543.9px;top:521.5px;width:143.0999999999999px;height:154.0px;background:#eaeaea"></div>
<div class="r" style="left:1543.9px;top:550.5px;width:307.0999999999999px;height:1.2999999999999545px;background:#d9d9d9"></div>
<div class="t " style="left:1551.4px;top:531.7px;font-size:16px;line-height:16px;color:#333;font-weight:normal;">駐車場</div>
<div class="t" style="right:69px;top:531.2px;font-size:17px;line-height:17px;color:#333;font-weight:normal;text-align:right;letter-spacing:0.8px;margin-right:-0.8px">空無 0円</div>
<div class="r" style="left:1543.9px;top:581.5px;width:307.0999999999999px;height:1.2999999999999545px;background:#d9d9d9"></div>
<div class="t " style="left:1551.4px;top:562.2px;font-size:16px;line-height:16px;color:#333;font-weight:normal;">AD</div>
<div class="t" style="right:69px;top:561.7px;font-size:17px;line-height:17px;color:#333;font-weight:normal;text-align:right;letter-spacing:0.8px;margin-right:-0.8px">1.0ヵ月</div>
<div class="r" style="left:1543.9px;top:612.5px;width:307.0999999999999px;height:1.2999999999999545px;background:#d9d9d9"></div>
<div class="t " style="left:1551.4px;top:593.2px;font-size:16px;line-height:16px;color:#333;font-weight:normal;">スーモスコア</div>
<div class="t" style="right:69px;top:592.7px;font-size:17px;line-height:17px;color:#333;font-weight:normal;text-align:right;letter-spacing:0.8px;margin-right:-0.8px">38点</div>
<div class="r" style="left:1543.9px;top:643.5px;width:307.0999999999999px;height:1.2999999999999545px;background:#d9d9d9"></div>
<div class="t " style="left:1551.4px;top:624.2px;font-size:16px;line-height:16px;color:#333;font-weight:normal;">写真</div>
<div class="t" style="right:69px;top:623.7px;font-size:17px;line-height:17px;color:#333;font-weight:normal;text-align:right;letter-spacing:0.8px;margin-right:-0.8px">12枚</div>
<div class="r" style="left:1543.9px;top:674.5px;width:307.0999999999999px;height:1.2999999999999545px;background:#d9d9d9"></div>
<div class="t " style="left:1551.4px;top:655.2px;font-size:16px;line-height:16px;color:#333;font-weight:normal;">パノラマ</div>
<div class="t" style="right:69px;top:654.7px;font-size:17px;line-height:17px;color:#333;font-weight:normal;text-align:right;letter-spacing:0.8px;margin-right:-0.8px">有</div>
<div class="t " style="left:887.7px;top:690.5px;font-size:17px;line-height:17px;color:#333;font-weight:normal;">テスト元付業者</div>
<div class="t " style="left:888.6px;top:717.3px;font-size:19.5px;line-height:19.5px;color:#111;font-weight:bold;-webkit-text-stroke-width:0;letter-spacing:1.4px">111-222-3333</div>
<div class="r" style="left:564.2px;top:880px;width:18.59999999999991px;height:18.700000000000045px;border:1.5px solid #d4d4d4;background:#f6f6f6"></div>
<div class="r" style="left:590.7px;top:748.6px;width:270.29999999999995px;height:207.69999999999993px;background:#fff"></div>
<svg style="left:600px;top:805px" width="260" height="95" viewBox="0 0 1920 702" preserveAspectRatio="none">
<path d="M65 230 A100 100 0 0 0 165 330" fill="none" stroke="#bbb" stroke-width="6"/>
<path d="M65 230 H165" stroke="#ccc" stroke-width="5"/>
<path d="M1560 88 H1830 V300 H1700 V615 H1560 Z" fill="#b6b6b6"/><g stroke="#9e9e9e" stroke-width="3" opacity="0.8"><path d="M1580 88V615M1610 88V615M1640 88V615M1670 88V615M1700 88V300M1730 88V300M1760 88V300M1790 88V300M1820 88V300M1560 118H1830M1560 148H1830M1560 178H1830M1560 208H1830M1560 238H1830M1560 268H1830M1560 298H1700M1560 328H1700M1560 358H1700M1560 388H1700M1560 418H1700M1560 448H1700M1560 478H1700M1560 508H1700M1560 538H1700M1560 568H1700M1560 598H1700"/></g>
<rect x="1600" y="195" width="185" height="75" fill="#fff"/>
<text x="1692" y="252" font-size="52" text-anchor="middle" fill="#444" font-family="Liberation Sans">balcony</text>
<rect x="170" y="93" width="1385" height="518" fill="#fff" stroke="#111" stroke-width="11"/>
<rect x="965" y="98" width="585" height="508" fill="#f1e2cc"/>
<g stroke="#dcc3a4" stroke-width="4">
<path d="M985 98V606M1015 98V606M1045 98V606M1075 98V606M1105 98V606M1135 98V606M1165 98V606M1195 98V606M1225 98V606M1255 98V606M1285 98V606M1315 98V606M1345 98V606M1375 98V606M1405 98V606M1435 98V606M1465 98V606M1495 98V606M1525 98V606"/>
</g>
<rect x="1130" y="330" width="220" height="75" fill="#fff"/>
<text x="1240" y="388" font-size="52" text-anchor="middle" fill="#444" font-family="Liberation Sans">room 8.5</text>
<rect x="690" y="98" width="270" height="127" fill="#ecd6da"/>
<text x="825" y="178" font-size="50" text-anchor="middle" fill="#555" font-family="Liberation Sans" font-weight="bold">storage</text>
<rect x="690" y="225" width="270" height="175" fill="#f1e2cc"/>
<g stroke="#dcc3a4" stroke-width="4"><path d="M715 225V400M745 225V400M775 225V400M805 225V400M835 225V400M865 225V400M895 225V400M925 225V400"/></g>
<rect x="340" y="190" width="345" height="210" fill="#f4e8d4"/>
<rect x="380" y="98" width="300" height="92" fill="#f6f6f6"/>
<path d="M590 110 L675 180 M675 110 L590 180" stroke="#aaa" stroke-width="4"/>
<rect x="175" y="98" width="165" height="100" fill="#111"/>
<rect x="175" y="200" width="160" height="200" fill="#aaa"/>
<path d="M270 400 L212 400 A58 58 0 0 1 270 342 Z M270 400 L328 400 A58 58 0 0 0 270 342 Z M360 400 L360 335 A65 65 0 0 1 425 400 Z M500 400 L500 325 A75 75 0 0 1 575 400 Z M695 400 L695 320 A80 80 0 0 1 775 400 Z" fill="#fff" stroke="#c8c8c8" stroke-width="4"/>
<rect x="175" y="400" width="30" height="70" fill="#111"/>
<rect x="205" y="405" width="130" height="60" fill="#f0dde0"/>
<text x="270" y="450" font-size="40" text-anchor="middle" fill="#555" font-family="Liberation Sans">shoes</text>
<path d="M178 482 H335 V605 H178 Z M178 482 L335 605 M335 482 L178 605" fill="#fff" stroke="#999" stroke-width="4"/>
<rect x="350" y="405" width="125" height="200" fill="#eef0f7"/>
<rect x="485" y="405" width="205" height="200" fill="#eef0f7"/>
<rect x="695" y="410" width="265" height="195" fill="#eef0f7"/>
<rect x="835" y="430" width="110" height="160" rx="40" fill="#fff" stroke="#bbb" stroke-width="4"/>
<ellipse cx="410" cy="555" rx="30" ry="40" fill="#fff" stroke="#bbb" stroke-width="4"/>
<g stroke="#111" stroke-width="9" fill="none">
<path d="M340 93 V200 M345 400 V611 M480 400 V611 M690 93 V270 M690 400 V611 M960 93 V230 M960 400 V611 M340 400 H480 M600 405 H965 M170 475 H340 M1550 93 V180 M1550 510 V611"/>
</g>
<rect x="1515" y="88" width="75" height="72" fill="#111"/>
<rect x="345" y="95" width="25" height="130" fill="#fff" stroke="#333" stroke-width="3"/>
</svg>

<div class="r" style="left:591px;top:956.3px;width:270px;height:62.0px;background:#e9e9e9"></div>
<div class="t " style="left:604.3px;top:968.0px;font-size:14.2px;line-height:14.2px;color:#333;font-weight:normal;">更新日</div>
<div class="t" style="right:1074px;top:968.0px;font-size:14.2px;line-height:14.2px;color:#333;font-weight:normal;text-align:right;letter-spacing:0.95px;margin-right:-2.3px">2024年03月14日</div>
<div class="t " style="left:604.3px;top:992.8px;font-size:14.2px;line-height:14.2px;color:#333;font-weight:normal;">WEB公開日</div>
<div class="t" style="right:1074px;top:992.8px;font-size:14.2px;line-height:14.2px;color:#333;font-weight:normal;text-align:right;letter-spacing:0.95px;margin-right:-2.3px">2024年02月28日</div>
<div class="r" style="left:886.8px;top:749.2px;width:144.70000000000005px;height:43.0px;background:#e7e8e8"></div>
<div class="t" style="left:886.8px;width:144.70000000000005px;top:762.2px;font-size:17px;line-height:17px;color:#5b90d3;font-weight:normal;text-align:center;">簡易編集</div>
<div class="r" style="left:1050.3px;top:749.2px;width:144.70000000000005px;height:43.0px;background:#e7e8e8"></div>
<div class="t" style="left:1050.3px;width:144.70000000000005px;top:762.2px;font-size:17px;line-height:17px;color:#5b90d3;font-weight:normal;text-align:center;">その他条件</div>
<div class="r" style="left:1214.7px;top:749.2px;width:143.89999999999986px;height:43.0px;background:#e7e8e8"></div>
<div class="t" style="left:1214.7px;width:143.89999999999986px;top:762.2px;font-size:17px;line-height:17px;color:#5b90d3;font-weight:normal;text-align:center;">資料</div>
<div class="r" style="left:1377.9px;top:749.2px;width:144.5px;height:43.0px;background:#e7e8e8"></div>
<div class="t" style="left:1377.9px;width:144.5px;top:762.2px;font-size:17px;line-height:17px;color:#5b90d3;font-weight:normal;text-align:center;">URL</div>
<div class="r" style="left:1543.9px;top:749.2px;width:143.0999999999999px;height:43.0px;background:#e7e8e8"></div>
<div class="t" style="left:1543.9px;width:143.0999999999999px;top:762.2px;font-size:17px;line-height:17px;color:#5b90d3;font-weight:normal;text-align:center;">掲載</div>
<div class="r" style="left:1705.6px;top:749.2px;width:145.4000000000001px;height:43.0px;background:#e7e8e8"></div>
<div class="t" style="left:1705.6px;width:145.4000000000001px;top:762.2px;font-size:17px;line-height:17px;color:#5b90d3;font-weight:normal;text-align:center;">鍵所在・元付</div>
<div class="r" style="left:886.8px;top:801.5px;width:144.70000000000005px;height:154.0px;background:#eaeaea"></div>
<div class="r" style="left:886.8px;top:830.5px;width:308.20000000000005px;height:1.2999999999999545px;background:#d9d9d9"></div>
<div class="t " style="left:894.3px;top:811.7px;font-size:16px;line-height:16px;color:#333;font-weight:normal;">部屋番号</div>
<div class="t" style="right:725px;top:811.2px;font-size:17px;line-height:17px;color:#333;font-weight:normal;text-align:right;letter-spacing:0.8px;margin-right:-0.8px"><span style="color:#3434b4;text-decoration:underline;text-underline-offset:2px">101号室</span></div>
<div class="r" style="left:886.8px;top:861.5px;width:308.20000000000005px;height:1.2999999999999545px;background:#d9d9d9"></div>
<div class="t " style="left:894.3px;top:842.2px;font-size:16px;line-height:16px;color:#333;font-weight:normal;">現況</div>
<div class="t" style="right:725px;top:844.1px;font-size:15px;line-height:15px;color:#333;font-weight:normal;text-align:right;">空室 即時</div>
<div class="r" style="left:886.8px;top:892.5px;width:308.20000000000005px;height:1.2999999999999545px;background:#d9d9d9"></div>
<div class="t " style="left:894.3px;top:873.2px;font-size:16px;line-height:16px;color:#333;font-weight:normal;">間取り</div>
<div class="t" style="right:725px;top:872.7px;font-size:17px;line-height:17px;color:#333;font-weight:normal;text-align:right;letter-spacing:0.8px;margin-right:-0.8px">1K</div>
<div class="r" style="left:886.8px;top:923.5px;width:308.20000000000005px;height:1.2999999999999545px;background:#d9d9d9"></div>
<div class="t " style="left:894.3px;top:904.2px;font-size:16px;line-height:16px;color:#333;font-weight:normal;">面積</div>
<div class="t" style="right:725px;top:903.7px;font-size:17px;line-height:17px;color:#333;font-weight:normal;text-align:right;letter-spacing:0.8px;margin-right:-0.8px">30.60m<span style="display:inline-block;font-size:6px;line-height:6px;vertical-align:8.5px;margin-left:-2.4px;letter-spacing:0">2</span></div>
<div class="r" style="left:886.8px;top:954.5px;width:308.20000000000005px;height:1.2999999999999545px;background:#d9d9d9"></div>
<div class="t " style="left:894.3px;top:935.2px;font-size:16px;line-height:16px;color:#333;font-weight:normal;">方角</div>
<div class="t" style="right:725px;top:934.7px;font-size:17px;line-height:17px;color:#333;font-weight:normal;text-align:right;letter-spacing:0.8px;margin-right:-0.8px">南</div>
<div class="r" style="left:1214.7px;top:801.5px;width:143.89999999999986px;height:154.0px;background:#eaeaea"></div>
<div class="r" style="left:1214.7px;top:830.5px;width:307.70000000000005px;height:1.2999999999999545px;background:#d9d9d9"></div>
<div class="t " style="left:1222.2px;top:811.7px;font-size:16px;line-height:16px;color:#333;font-weight:normal;">賃料</div>
<div class="t" style="right:397.5999999999999px;top:811.2px;font-size:17px;line-height:17px;color:#333;font-weight:normal;text-align:right;letter-spacing:0.8px;margin-right:-0.8px">69,000円</div>
<div class="r" style="left:1214.7px;top:861.5px;width:307.70000000000005px;height:1.2999999999999545px;background:#d9d9d9"></div>
<div class="t " style="left:1222.2px;top:842.2px;font-size:16px;line-height:16px;color:#333;font-weight:normal;">管理費</div>
<div class="t" style="right:397.5999999999999px;top:841.7px;font-size:17px;line-height:17px;color:#333;font-weight:normal;text-align:right;letter-spacing:0.8px;margin-right:-0.8px">7,000円</div>
<div class="r" style="left:1214.7px;top:892.5px;width:307.70000000000005px;height:1.2999999999999545px;background:#d9d9d9"></div>
<div class="t " style="left:1222.2px;top:873.2px;font-size:16px;line-height:16px;color:#333;font-weight:normal;">敷金/保証金</div>
<div class="t" style="right:397.5999999999999px;top:872.7px;font-size:17px;line-height:17px;color:#333;font-weight:normal;text-align:right;letter-spacing:0.8px;margin-right:-0.8px">1.0ヵ月</div>
<div class="r" style="left:1214.7px;top:923.5px;width:307.70000000000005px;height:1.2999999999999545px;background:#d9d9d9"></div>
<div class="t " style="left:1222.2px;top:904.2px;font-size:16px;line-height:16px;color:#333;font-weight:normal;">定額修繕費</div>
<div class="r" style="left:1214.7px;top:954.5px;width:307.70000000000005px;height:1.2999999999999545px;background:#d9d9d9"></div>
<div class="t " style="left:1222.2px;top:935.2px;font-size:16px;line-height:16px;color:#333;font-weight:normal;">礼金</div>
<div class="t" style="right:397.5999999999999px;top:934.7px;font-size:17px;line-height:17px;color:#333;font-weight:normal;text-align:right;letter-spacing:0.8px;margin-right:-0.8px">1.0ヵ月</div>
<div class="r" style="left:1543.9px;top:801.5px;width:143.0999999999999px;height:154.0px;background:#eaeaea"></div>
<div class="r" style="left:1543.9px;top:830.5px;width:307.0999999999999px;height:1.2999999999999545px;background:#d9d9d9"></div>
<div class="t " style="left:1551.4px;top:811.7px;font-size:16px;line-height:16px;color:#333;font-weight:normal;">駐車場</div>
<div class="t" style="right:69px;top:811.2px;font-size:17px;line-height:17px;color:#333;font-weight:normal;text-align:right;letter-spacing:0.8px;margin-right:-0.8px">空無 0円</div>
<div class="r" style="left:1543.9px;top:861.5px;width:307.0999999999999px;height:1.2999999999999545px;background:#d9d9d9"></div>
<div class="t " style="left:1551.4px;top:842.2px;font-size:16px;line-height:16px;color:#333;font-weight:normal;">AD</div>
<div class="t" style="right:69px;top:841.7px;font-size:17px;line-height:17px;color:#333;font-weight:normal;text-align:right;letter-spacing:0.8px;margin-right:-0.8px">1.0ヵ月</div>
<div class="r" style="left:1543.9px;top:892.5px;width:307.0999999999999px;height:1.2999999999999545px;background:#d9d9d9"></div>
<div class="t " style="left:1551.4px;top:873.2px;font-size:16px;line-height:16px;color:#333;font-weight:normal;">スーモスコア</div>
<div class="t" style="right:69px;top:872.7px;font-size:17px;line-height:17px;color:#333;font-weight:normal;text-align:right;letter-spacing:0.8px;margin-right:-0.8px"><span style="color:#e26058">34</span>点</div>
<div class="r" style="left:1543.9px;top:923.5px;width:307.0999999999999px;height:1.2999999999999545px;background:#d9d9d9"></div>
<div class="t " style="left:1551.4px;top:904.2px;font-size:16px;line-height:16px;color:#333;font-weight:normal;">写真</div>
<div class="t" style="right:69px;top:903.7px;font-size:17px;line-height:17px;color:#333;font-weight:normal;text-align:right;letter-spacing:0.8px;margin-right:-0.8px">12枚</div>
<div class="r" style="left:1543.9px;top:954.5px;width:307.0999999999999px;height:1.2999999999999545px;background:#d9d9d9"></div>
<div class="t " style="left:1551.4px;top:935.2px;font-size:16px;line-height:16px;color:#333;font-weight:normal;">パノラマ</div>
<div class="t" style="right:69px;top:934.7px;font-size:17px;line-height:17px;color:#333;font-weight:normal;text-align:right;letter-spacing:0.8px;margin-right:-0.8px"><span style="color:#e26058">無</span></div>
<div class="t " style="left:887.7px;top:970.5px;font-size:17px;line-height:17px;color:#333;font-weight:normal;">テスト元付業者</div>
<div class="t " style="left:888.6px;top:997.3px;font-size:19.5px;line-height:19.5px;color:#111;font-weight:bold;-webkit-text-stroke-width:0;letter-spacing:1.4px">111-222-3333</div>
<div class="r" style="left:1254.4px;top:738.4px;width:282.1999999999998px;height:67.60000000000002px;border:4px solid #d8392d;border-radius:13px;background:#f2d4d1"></div>
<div class="t " style="left:1279px;top:762.2px;font-size:24px;line-height:24px;color:#222;font-weight:normal;">スーモスコアの点数</div>
<div class="r" style="left:1394px;top:804px;width:4px;height:75.79999999999995px;background:#d8392d"></div>
<div class="r" style="left:1394px;top:875.8px;width:148px;height:4.0px;background:#d8392d"></div>
<div class="r" style="left:1540.3px;top:858.6px;width:316.10000000000014px;height:36.89999999999998px;border:4px solid #d8392d;border-radius:2px"></div>
<div class="r" style="left:0px;top:1026px;width:1920px;height:4px;background:#f8f8f8"></div>
</body></html>
